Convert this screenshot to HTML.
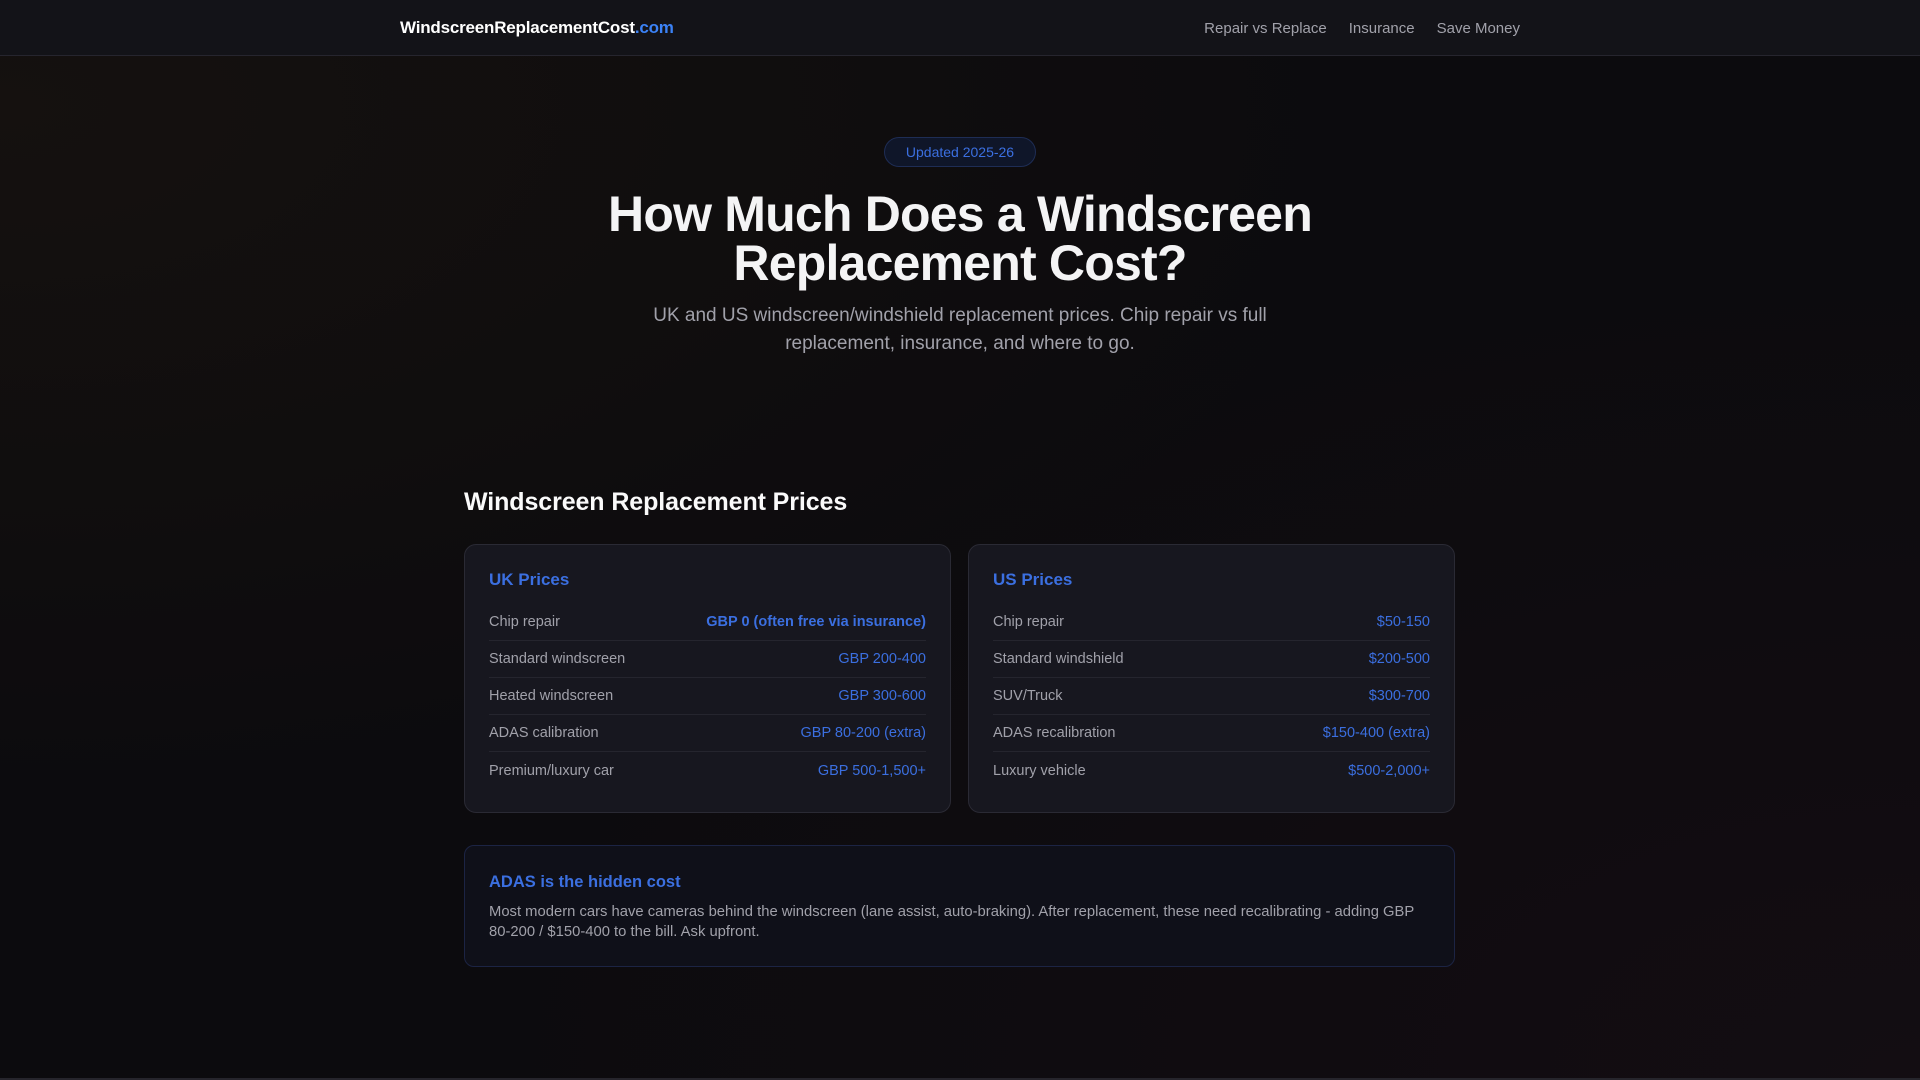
<!DOCTYPE html>
<html><head><meta charset="utf-8"><style>
*{margin:0;padding:0;box-sizing:border-box}
html,body{width:1920px;height:1080px;overflow:hidden}
body{font-family:"Liberation Sans",sans-serif;color:#e4e4e7;
background:radial-gradient(ellipse at 0% 10%,#15110f 0%,transparent 50%),radial-gradient(ellipse at 100% 100%,#130d12 0%,transparent 55%),#0c0b0e;position:relative}
.nav{height:56px;background:#131318;border-bottom:1px solid #26252e;position:relative}
.logo{position:absolute;left:400px;top:18px;font-size:17px;font-weight:bold;color:#fff;letter-spacing:-0.2px}
.logo span{color:#3b82f6}
.links{position:absolute;right:400px;top:20px;font-size:15px;color:#a1a1aa}
.links a{margin-left:22px;color:#a1a1aa;text-decoration:none}
.badge{position:absolute;left:884px;top:137px;width:152px;height:30px;border:1px solid #1e2d55;background:#0f1629;border-radius:15px;color:#3b6fe0;font-size:14px;text-align:center;line-height:28px}
h1{position:absolute;left:0;width:1920px;top:190px;text-align:center;font-size:50px;line-height:49px;font-weight:bold;color:#f4f4f5;letter-spacing:-0.8px}
.sub{position:absolute;left:610px;width:700px;top:302px;text-align:center;font-size:19px;line-height:28px;color:#a1a1aa}
h2{position:absolute;left:464px;top:488px;font-size:25px;font-weight:bold;color:#fafafa;letter-spacing:-0.1px}
.card{position:absolute;top:544px;width:487px;height:269px;background:#17171f;border:1px solid #2a2a34;border-radius:12px;padding:24px 24px}
.card h3{font-size:17px;color:#3b6fe0;font-weight:bold;margin-top:1px;margin-bottom:14px}
.row{display:flex;justify-content:space-between;height:37px;align-items:center;font-size:14.5px;color:#a1a1aa;border-bottom:1px solid #25252e}
.row:last-child{border-bottom:none}
.row b{font-weight:normal;color:#3b6fe0}
.row b.s{font-weight:bold}
.adas{position:absolute;left:464px;top:845px;width:991px;height:122px;background:#0f1019;border:1px solid #1c2444;border-radius:10px;padding:27px 24px}
.adas h4{font-size:16.5px;color:#3b6fe0;font-weight:bold;margin-bottom:10px}
.adas p{font-size:14.8px;line-height:20px;color:#a1a1aa}
.bot{position:absolute;left:0;bottom:0;width:1920px;height:2px;background:#26252c}
</style></head><body>
<div class="nav"><div class="logo">WindscreenReplacementCost<span>.com</span></div>
<div class="links"><a>Repair vs Replace</a><a>Insurance</a><a>Save Money</a></div></div>
<div class="badge">Updated 2025-26</div>
<h1>How Much Does a Windscreen<br>Replacement Cost?</h1>
<div class="sub">UK and US windscreen/windshield replacement prices. Chip repair vs full replacement, insurance, and where to go.</div>
<h2>Windscreen Replacement Prices</h2>
<div class="card" style="left:464px"><h3>UK Prices</h3>
<div class="row"><span>Chip repair</span><b class="s">GBP 0 (often free via insurance)</b></div>
<div class="row"><span>Standard windscreen</span><b>GBP 200-400</b></div>
<div class="row"><span>Heated windscreen</span><b>GBP 300-600</b></div>
<div class="row"><span>ADAS calibration</span><b>GBP 80-200 (extra)</b></div>
<div class="row"><span>Premium/luxury car</span><b>GBP 500-1,500+</b></div></div>
<div class="card" style="left:968px"><h3>US Prices</h3>
<div class="row"><span>Chip repair</span><b>$50-150</b></div>
<div class="row"><span>Standard windshield</span><b>$200-500</b></div>
<div class="row"><span>SUV/Truck</span><b>$300-700</b></div>
<div class="row"><span>ADAS recalibration</span><b>$150-400 (extra)</b></div>
<div class="row"><span>Luxury vehicle</span><b>$500-2,000+</b></div></div>
<div class="adas"><h4>ADAS is the hidden cost</h4>
<p>Most modern cars have cameras behind the windscreen (lane assist, auto-braking). After replacement, these need recalibrating - adding GBP 80-200 / $150-400 to the bill. Ask upfront.</p></div>
<div class="bot"></div>
</body></html>
